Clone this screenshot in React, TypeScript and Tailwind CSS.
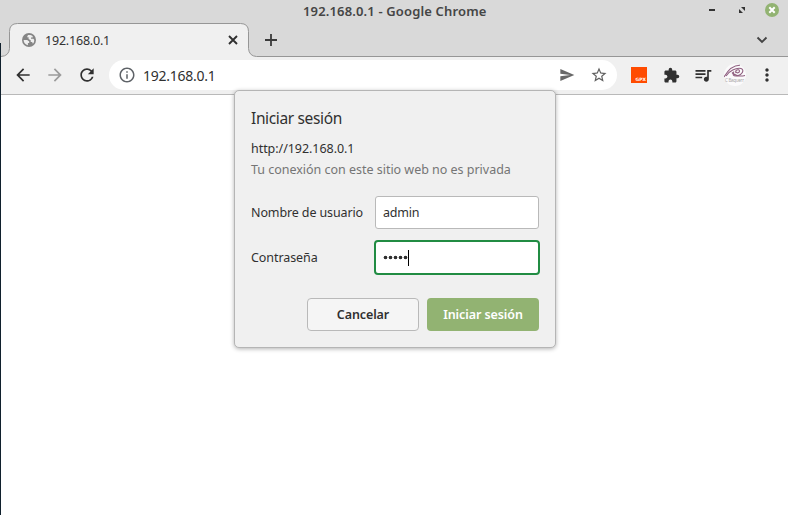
import React from 'react';
import { MdArrowBack, MdArrowForward, MdExtension, MdInfoOutline, MdMoreVert, MdQueueMusic, MdRefresh, MdSend, MdStarBorder } from 'react-icons/md';

function TitleBar() {
  return (
    <header className="relative h-[23px] shrink-0">
      <h1 className="ml-[303px] w-[200px] whitespace-nowrap text-[13px] leading-[23px] font-semibold tracking-[0.15px] text-[#454545]">192.168.0.1 - Google Chrome</h1>
      <svg className="absolute top-0 right-0" width="88" height="23" viewBox="0 0 88 23">
        <path d="M9 10h6" stroke="#333" strokeWidth="2" />
        <path d="M41 7h4v4zM39 9v4h4z" fill="#333" />
        <circle cx="72" cy="10" r="7" fill="#92b372" />
        <path d="M69.3 7.3l5.4 5.4M74.7 7.3l-5.4 5.4" stroke="#fff" strokeWidth="2" />
      </svg>
    </header>
  );
}

function TabStrip() {
  return (
    <div className="relative flex h-[34px] shrink-0 items-start">
      <svg className="absolute top-0 left-0" width="788" height="34" viewBox="0 0 788 34">
        <path d="M0 33.5h1q8-1 8.500-8V8.500q0-8 8-8h223q8 0 8 8V25.500q.5 7 8 8H788V34H0z" fill="#f0f0f0" />
        <path d="M0 33.500h1q8-.5 8.500-8V8.500q0-8 8-8h223q8 0 8 8V25.500q.5 7.500 8 8H788" fill="none" stroke="#969696" />
      </svg>
      <div className="relative flex h-full w-[249px] items-center pl-[22px]">
        <svg width="14" height="14" viewBox="0 0 14 14">
          <circle cx="7" cy="7" r="7" fill="#858585" />
          <path d="M1.600 7h3.600l2 1.500v1.400H5.900v2.300C3.500 11.800 1.700 9.800 1.600 7zM6 2.100c1.700-.5 3.600 0 4.700 1.200v1.200H9v1.300h2.300l.9.900c.2 1.400-.4 3-1.300 4l-.8-1.600H8.700V7.300L6.600 6V4.300H5z" fill="#eee" />
        </svg>
        <span className="ml-[9px] w-[174px] pt-[2px] text-[12.500px] tracking-[-0.2px] text-[#333]">192.168.0.1</span>
        <svg className="ml-[9px]" width="10" height="10" viewBox="0 0 10 10">
          <path d="M1 1l8 8M9 1L1 9" stroke="#303030" strokeWidth="1.900" />
        </svg>
      </div>
      <svg className="relative mt-[10px] ml-[15px]" width="14" height="14" viewBox="0 0 14 14">
        <path d="M7 1v12M1 7h12" stroke="#3a3a3a" strokeWidth="1.800" />
      </svg>
      <svg className="relative mt-[13px] mr-5 ml-auto" width="12" height="8" viewBox="0 0 12 8">
        <path d="M1.500 1.500L6 6l4.500-4.500" stroke="#444" strokeWidth="1.900" fill="none" />
      </svg>
    </div>
  );
}

function Avatar() {
  return (
    <svg width="22" height="22" viewBox="0 0 22 22">
      <circle cx="11" cy="11" r="11" fill="#fbfafb" />
      <g fill="none" stroke="#8f5f80" strokeWidth="1.100">
        <path d="M0 13C4 6 9 1 16 1.200" />
        <path d="M2 12C5 7 12 3.500 17 4.500C21 6 18 11 13 12C9 12.500 8 10 10 7.500" />
        <path d="M12 9C10.500 6 15 4.500 15.500 7C15.500 9 13 9.500 12 8" />
        <path d="M8 8.500Q13 13.500 21 11.500" />
      </g>
      <text x="1" y="18" fontSize="4.500" fill="#aaa7aa" textLength="19">C Baquerr</text>
    </svg>
  );
}

function Toolbar() {
  return (
    <div className="flex h-[38px] shrink-0 items-start border-b border-[#b9b9b9] bg-[#f0f0f0] pt-[3px]">
      <div className="flex h-[30px] w-[109px] items-center pl-[13px]">
        <MdArrowBack className="size-5 text-[#303030]" />
        <MdArrowForward className="ml-3 size-5 text-[#9b9b9b]" />
        <MdRefresh className="ml-3 size-5 text-[#303030]" />
      </div>
      <div className="flex h-[30px] w-[508px] items-center rounded-full bg-white pr-[9px] pl-[9px]">
        <MdInfoOutline className="size-[18px] text-[#5f6368]" />
        <span className="ml-[7px] text-[14px] tracking-[-0.25px] text-[#303030]">192.168.0.1</span>
        <MdSend className="ml-auto size-4 text-[#686868]" />
        <MdStarBorder className="ml-[15px] size-[18px] text-[#606060]" />
      </div>
      <div className="flex h-[30px] flex-1 items-center pl-[14px]">
        <div className="flex h-4 w-4 items-end justify-end bg-[#ff4b00] pr-px">
          <span className="font-['DejaVu_Sans'] text-[4.500px] leading-[6px] font-bold text-white">GPX</span>
        </div>
        <MdExtension className="ml-4 size-[17px] text-[#303030]" />
        <MdQueueMusic className="ml-[13px] size-5 text-[#303030]" />
        <div className="ml-[11px]"><Avatar /></div>
        <MdMoreVert className="ml-[11px] size-5 text-[#303030]" />
      </div>
    </div>
  );
}

function LoginDialog() {
  return (
    <form className="absolute top-[90px] left-[234px] flex h-[258px] w-[322px] flex-col rounded-[5px] border border-[#b5b5b5] bg-[#f0f0f0] px-4 text-[12.500px] text-[#303030] shadow-[0_1px_4px_rgba(0,0,0,0.3)]">
      <h2 className="mt-[15px] h-6 text-[15.500px] leading-6 tracking-[-0.36px] whitespace-nowrap">Iniciar sesión</h2>
      <p className="mt-[9px] h-5 leading-5 tracking-[-0.05px]">http://192.168.0.1</p>
      <p className="mt-px h-5 leading-5 tracking-[-0.02px] whitespace-nowrap text-[#757575]">Tu conexión con este sitio web no es privada</p>
      <label className="mt-[16px] flex h-[33px] items-center">
        <span className="w-[124px] pt-[2px] tracking-[-0.12px] whitespace-nowrap">Nombre de usuario</span>
        <span className="flex h-[33px] w-[164px] items-center rounded-[3px] border border-[#b9b9b9] bg-white pt-[2px] pl-[7px] tracking-[-0.2px]">admin</span>
      </label>
      <label className="mt-[11px] flex h-[35px] items-center">
        <span className="w-[123px] pt-[2px] tracking-[-0.08px]">Contraseña</span>
        <span className="-mr-px flex h-[35px] w-[166px] items-center gap-[2px] rounded-[4px] border-2 border-[#218c43] bg-white pl-[8px]">
          {[0, 1, 2, 3, 4].map((dot) => <i key={dot} className="size-[3px] rounded-full bg-[#303030] ring-[0.3px] ring-[#303030]" />)}
          <i className="-ml-px h-4 w-px bg-black" />
        </span>
      </label>
      <div className="mt-[23px] flex gap-2 pl-14 font-semibold">
        <button type="button" className="h-[33px] w-[112px] rounded-[4px] border border-[#b9b9b9] bg-[#f5f5f5] pt-[2px] tracking-[-0.1px]">Cancelar</button>
        <button type="button" className="h-[33px] w-[112px] rounded-[4px] bg-[#92b372] pt-[2px] tracking-[-0.08px] text-white">Iniciar sesión</button>
      </div>
    </form>
  );
}

export default function App() {
  return (
    <div className="relative flex h-[515px] w-[788px] flex-col overflow-hidden bg-[#d9d9d9] font-['Noto_Sans',sans-serif]">
      <TitleBar />
      <TabStrip />
      <Toolbar />
      <main className="flex-1 bg-white" />
      <i className="absolute top-[43px] bottom-0 left-0 w-px bg-[#10202d]" />
      <LoginDialog />
    </div>
  );
}
